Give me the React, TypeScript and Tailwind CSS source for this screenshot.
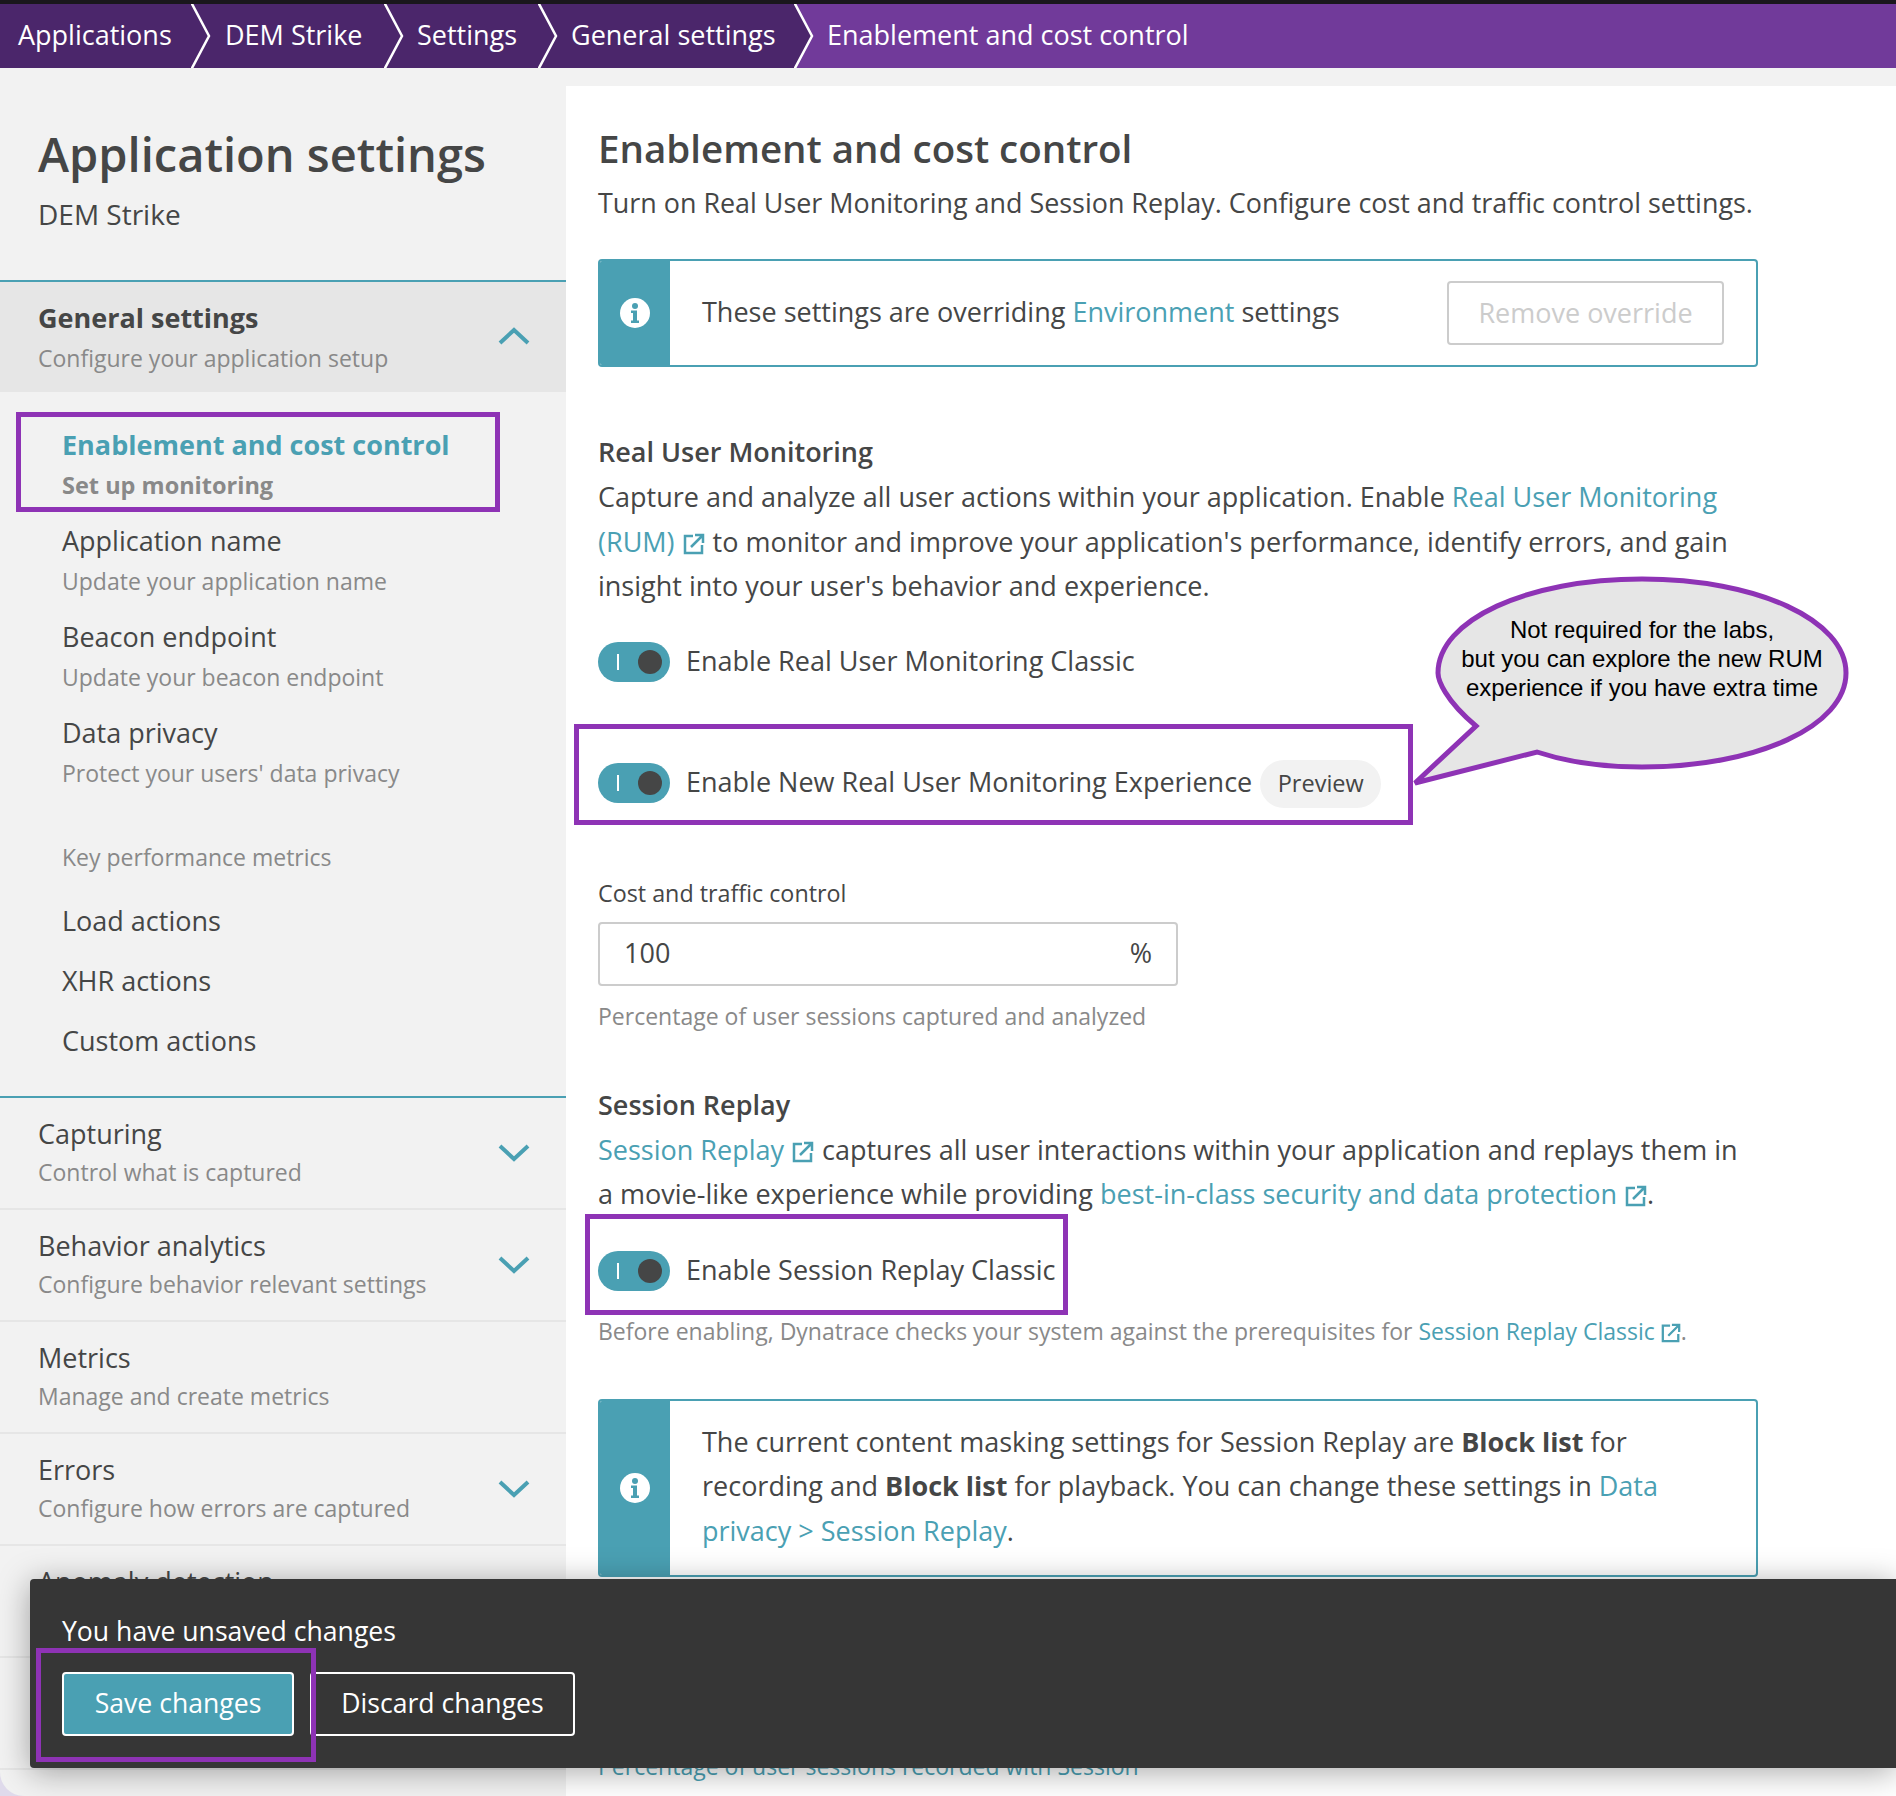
import React from 'react'

const font = "font-['Open_Sans',sans-serif]"

function Crumb({ label, className, last }: { label: string; className: string; last?: boolean }) {
  return (
    <div className={`relative flex h-full shrink-0 items-center ${className} ${last ? 'bg-[#713a9a]' : 'bg-[#4b266b]'}`}>
      <span className="whitespace-nowrap pb-[2px] text-[27px] text-white">{label}</span>
      {!last && (
        <svg className="absolute left-full top-0 z-10 h-full w-[20px]" viewBox="0 0 20 64">
          <path d="M0 0 L18 32 L0 64 Z" fill="#4b266b" />
          <path d="M0 -2 L18 32 L0 66" fill="none" stroke="#fff" strokeWidth="2.500" />
        </svg>
      )}
    </div>
  )
}

function Chevron({ up }: { up?: boolean }) {
  return (
    <svg className="h-[18px] w-[32px]" viewBox="0 0 32 18">
      <path d={up ? 'M2 16 L16 3 L30 16' : 'M2 2 L16 15 L30 2'} fill="none" stroke="#4aa0b3" strokeWidth="4" />
    </svg>
  )
}

function Info() {
  return (
    <svg className="h-[30px] w-[30px]" viewBox="0 0 30 30">
      <circle cx="15" cy="15" r="15" fill="#fff" />
      <circle cx="15" cy="8" r="3" fill="#4aa0b3" />
      <path d="M11 12.500h6v10h2v2.500h-8v-2.500h2v-7.500h-2z" fill="#4aa0b3" />
    </svg>
  )
}

function Ext({ small, tight }: { small?: boolean; tight?: boolean }) {
  const size = small ? 'ml-[6px] h-[20px] w-[20px]' : tight ? 'ml-[8px] h-[22px] w-[22px]' : 'ml-[8px] mr-[8px] h-[22px] w-[22px]'
  return (
    <svg className={`inline-block align-[-3px] ${size}`} viewBox="0 0 22 22">
      <path d="M10 3H2v17h17v-8" fill="none" stroke="#4aa0b3" strokeWidth="2.500" />
      <path d="M8 14L19 3M12 2h8v8" fill="none" stroke="#4aa0b3" strokeWidth="2.500" />
    </svg>
  )
}

function Toggle() {
  return (
    <div className="relative flex h-[40px] w-[72px] shrink-0 items-center rounded-full bg-[#4aa0b3]">
      <span className="absolute left-[19px] h-[16px] w-[2px] bg-white" />
      <span className="absolute left-[40px] h-[24px] w-[24px] rounded-full bg-[#454646]" />
    </div>
  )
}

function A({ children }: { children: React.ReactNode }) {
  return <span className="text-[#4aa0b3]">{children}</span>
}

function SubItem({ title, sub }: { title: string; sub: string }) {
  return (
    <div className="flex h-[96px] flex-col pl-[62px]">
      <div className="text-[27px] leading-[36px] text-[#454646]">{title}</div>
      <div className="mt-[4px] text-[23px] leading-[36px] text-[#898989]">{sub}</div>
    </div>
  )
}

function Section({ title, sub, chevron }: { title: string; sub: string; chevron?: boolean }) {
  return (
    <div className="flex h-[112px] items-center justify-between border-b-2 border-[#e6e6e6] pl-[38px] pr-[36px]">
      <div className="flex flex-col">
        <div className="text-[27px] leading-[38px] text-[#454646]">{title}</div>
        <div className="text-[23px] leading-[38px] text-[#898989]">{sub}</div>
      </div>
      {chevron && <Chevron />}
    </div>
  )
}

function Callout() {
  return (
    <div className="absolute left-[1405px] top-[570px] z-10 h-[220px] w-[450px]">
      <svg className="absolute inset-0" width="450" height="220" viewBox="0 0 450 220">
        <path
          d="M10 213 L71 156 C40 130 33 110 33 103 C33 50 122 9 237 9 C352 9 441 50 441 103 C441 156 352 197 237 197 C200 197 165 193 132 182 Z"
          fill="#e6e6e6"
          stroke="#8e33b5"
          strokeWidth="5"
        />
      </svg>
      <div className="absolute left-[33px] top-[45px] w-[408px] text-center font-['Liberation_Sans',sans-serif] text-[24px] leading-[29px] text-black">
        <div>Not required for the labs,</div>
        <div>but you can explore the new RUM</div>
        <div>experience if you have extra time</div>
      </div>
    </div>
  )
}

export default function App() {
  return (
    <div className="h-[1796px] w-[1896px] overflow-hidden bg-[#dfdaeb]">
      <div className={`relative h-[1796px] w-[1896px] overflow-hidden rounded-bl-[24px] bg-[#f2f2f2] ${font}`}>
        <div className="h-[4px] bg-[#1a171c]" />
        <div className="flex h-[64px]">
          <Crumb label="Applications" className="w-[191px] pl-[18px]" />
          <Crumb label="DEM Strike" className="w-[193px] pl-[34px]" />
          <Crumb label="Settings" className="w-[154px] pl-[33px]" />
          <Crumb label="General settings" className="w-[256px] pl-[33px]" />
          <Crumb label="Enablement and cost control" className="flex-1 pl-[33px]" last />
        </div>

        <div className="flex h-[1728px]">
          <aside className="w-[566px] shrink-0">
            <div className="h-[212px] pl-[38px] pt-[51px]">
              <h1 className="text-[47px] font-semibold leading-[70px] text-[#454646]">Application settings</h1>
              <div className="mt-[5px] text-[28px] leading-[40px] text-[#454646]">DEM Strike</div>
            </div>
            <div className="flex h-[112px] items-center justify-between border-t-2 border-[#4aa0b3] bg-[#e6e6e6] pl-[38px] pr-[36px] pt-[2px]">
              <div>
                <div className="text-[27px] font-bold leading-[40px] text-[#454646]">General settings</div>
                <div className="text-[23px] leading-[40px] text-[#898989]">Configure your application setup</div>
              </div>
              <div className="-mt-[4px]"><Chevron up /></div>
            </div>
            <div className="relative mt-[20px] h-[100px] pl-[62px] pt-[14px]">
              <div className="text-[27px] font-bold leading-[38px] text-[#4aa0b3]">Enablement and cost control</div>
              <div className="mt-[2px] text-[23.500px] font-bold leading-[38px] text-[#898989]">Set up monitoring</div>
              <div className="absolute left-[16px] top-0 h-[100px] w-[484px] border-[5px] border-[#8e33b5]" />
            </div>
            <div className="mt-[11px]">
              <SubItem title="Application name" sub="Update your application name" />
              <SubItem title="Beacon endpoint" sub="Update your beacon endpoint" />
              <SubItem title="Data privacy" sub="Protect your users' data privacy" />
            </div>
            <div className="mt-[28px] pl-[62px] text-[23px] leading-[36px] text-[#898989]">Key performance metrics</div>
            <div className="mt-[28px] flex flex-col gap-[24px] pl-[62px] text-[27px] leading-[36px] text-[#454646]">
              <div>Load actions</div>
              <div>XHR actions</div>
              <div>Custom actions</div>
            </div>
            <div className="mt-[37px] border-t-2 border-[#4aa0b3]">
              <Section title="Capturing" sub="Control what is captured" chevron />
              <Section title="Behavior analytics" sub="Configure behavior relevant settings" chevron />
              <Section title="Metrics" sub="Manage and create metrics" />
              <Section title="Errors" sub="Configure how errors are captured" chevron />
              <Section title="Anomaly detection" sub={'\u00a0'} />
              <Section title={'\u00a0'} sub={'\u00a0'} />
            </div>
          </aside>

          <main className="mt-[18px] flex-1 bg-white pl-[32px] text-[27px] text-[#454646]">
            <div className="w-[1160px]">
              <h2 className="pt-[34px] text-[38.500px] font-semibold leading-[56px]">Enablement and cost control</h2>
              <p className="mt-[5px] whitespace-nowrap text-[26.900px] leading-[44px]">Turn on Real User Monitoring and Session Replay. Configure cost and traffic control settings.</p>

              <div className="mt-[34px] flex h-[108px] overflow-hidden rounded-[4px] border-2 border-[#4aa0b3]">
                <div className="flex w-[70px] shrink-0 items-center justify-center bg-[#4aa0b3]"><Info /></div>
                <div className="flex flex-1 items-center justify-between pl-[32px] pr-[32px]">
                  <span className="-mt-[2px]">These settings are overriding <A>Environment</A> settings</span>
                  <span className="flex h-[64px] w-[277px] items-center justify-center rounded-[4px] border-2 border-[#cccccc] text-[#cccccc]">Remove override</span>
                </div>
              </div>

              <h3 className="mt-[63px] text-[27px] font-semibold leading-[44px]">Real User Monitoring</h3>
              <p className="mt-[1px] leading-[44.500px]">
                Capture and analyze all user actions within your application. Enable <A>Real User Monitoring (RUM)</A><Ext />to monitor and improve your application's performance, identify errors, and gain insight into your user's behavior and experience.
              </p>

              <div className="mt-[33px] flex h-[40px] items-center gap-[16px]">
                <Toggle />
                <span>Enable Real User Monitoring Classic</span>
              </div>

              <div className="relative mt-[81px] flex h-[40px] items-center gap-[16px]">
                <Toggle />
                <span>Enable New Real User Monitoring Experience</span>
                <span className="-ml-[8px] mt-[2px] flex h-[48px] w-[121px] items-center justify-center rounded-full bg-[#f2f2f2] text-[23.500px]">Preview</span>
                <div className="absolute -top-[39px] left-[-24px] h-[101px] w-[839px] border-[5px] border-[#8e33b5]" />
              </div>

              <div className="mt-[72px] text-[23.300px] leading-[36px]">Cost and traffic control</div>
              <div className="mt-[11px] flex h-[64px] w-[580px] items-center justify-between rounded-[4px] border-2 border-[#cccccc] px-[24px]">
                <span>100</span>
                <span>%</span>
              </div>
              <div className="mt-[12px] text-[23px] leading-[36px] text-[#898989]">Percentage of user sessions captured and analyzed</div>

              <h3 className="mt-[49px] text-[27px] font-semibold leading-[44px]">Session Replay</h3>
              <p className="mt-[1px] leading-[44.500px]">
                <A>Session Replay</A><Ext />captures all user interactions within your application and replays them in a movie-like experience while providing <A>best-in-class security and data protection</A><Ext tight />.
              </p>

              <div className="relative mt-[34px] flex h-[40px] items-center gap-[16px]">
                <Toggle />
                <span>Enable Session Replay Classic</span>
                <div className="absolute -top-[37px] left-[-13px] h-[101px] w-[483px] border-[5px] border-[#8e33b5]" />
              </div>
              <div className="mt-[22px] whitespace-nowrap text-[23px] leading-[36px] text-[#898989]">
                Before enabling, Dynatrace checks your system against the prerequisites for <A>Session Replay Classic</A><Ext small />.
              </div>

              <div className="mt-[50px] flex h-[178px] overflow-hidden rounded-[4px] border-2 border-[#4aa0b3]">
                <div className="flex w-[70px] shrink-0 items-center justify-center bg-[#4aa0b3]"><Info /></div>
                <p className="flex-1 pl-[32px] pr-[60px] pt-[19px] leading-[44.500px]">
                  The current content masking settings for Session Replay are <b>Block list</b> for recording and <b>Block list</b> for playback. You can change these settings in <A>Data privacy &gt; Session Replay</A>.
                </p>
              </div>

              <div className="mt-[171px] text-[23px] leading-[36px] text-[#4aa0b3]">Percentage of user sessions recorded with Session</div>
            </div>
          </main>
        </div>

        <Callout />

        <div className="absolute left-[30px] right-0 top-[1579px] z-20 h-[189px] rounded-l-[4px] bg-[#363636] pl-[32px] pt-[34px] text-[26.600px] text-white shadow-[0_4px_32px_rgba(0,0,0,0.35)]">
          <div className="leading-[36px]">You have unsaved changes</div>
          <div className="mt-[23px] flex gap-[16px]">
            <span className="flex h-[64px] w-[232px] items-center justify-center rounded-[4px] border-2 border-white bg-[#4aa0b3]">Save changes</span>
            <span className="flex h-[64px] w-[265px] items-center justify-center rounded-[4px] border-2 border-white">Discard changes</span>
          </div>
          <div className="absolute left-[6px] top-[69px] h-[114px] w-[280px] border-[5px] border-[#8e33b5]" />
        </div>
      </div>
    </div>
  )
}
